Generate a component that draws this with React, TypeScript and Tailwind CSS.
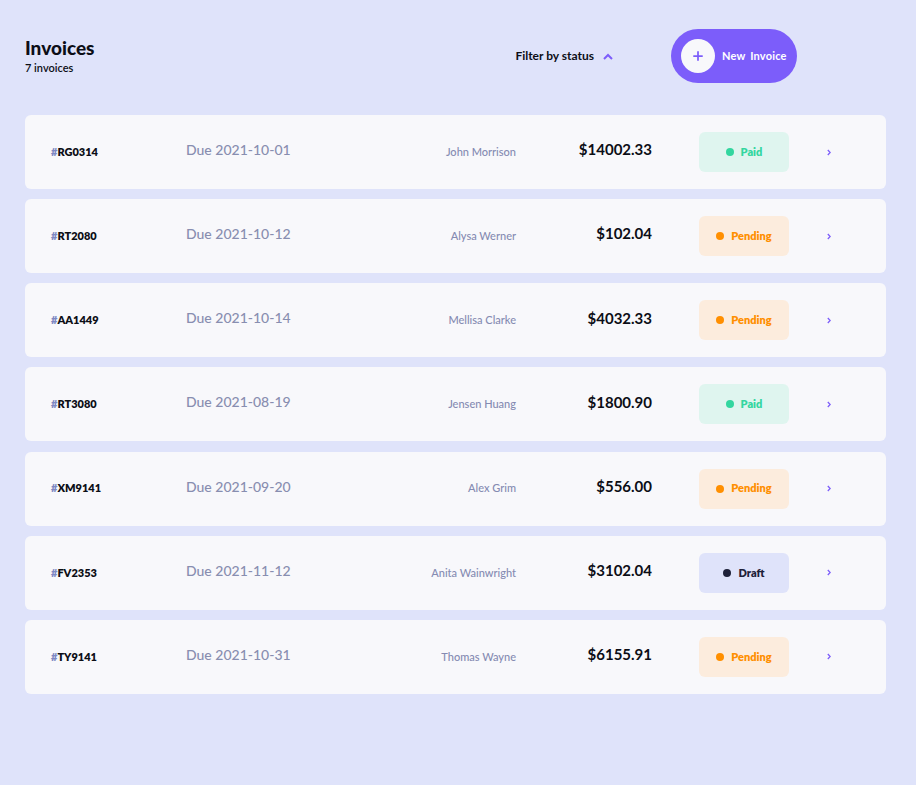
import { Plus } from "lucide-react";

type Status = "Paid" | "Pending" | "Draft";

const invoices: { id: string; due: string; name: string; amount: string; status: Status }[] = [
  { id: "RG0314", due: "2021-10-01", name: "John Morrison", amount: "$14002.33", status: "Paid" },
  { id: "RT2080", due: "2021-10-12", name: "Alysa Werner", amount: "$102.04", status: "Pending" },
  { id: "AA1449", due: "2021-10-14", name: "Mellisa Clarke", amount: "$4032.33", status: "Pending" },
  { id: "RT3080", due: "2021-08-19", name: "Jensen Huang", amount: "$1800.90", status: "Paid" },
  { id: "XM9141", due: "2021-09-20", name: "Alex Grim", amount: "$556.00", status: "Pending" },
  { id: "FV2353", due: "2021-11-12", name: "Anita Wainwright", amount: "$3102.04", status: "Draft" },
  { id: "TY9141", due: "2021-10-31", name: "Thomas Wayne", amount: "$6155.91", status: "Pending" },
];

const badgeStyles: Record<Status, { box: string; dot: string }> = {
  Paid: { box: "bg-[#dff5ef] text-[#33d69f]", dot: "bg-[#33d69f]" },
  Pending: { box: "bg-[#fcecdd] text-[#ff8f00]", dot: "bg-[#ff8f00]" },
  Draft: { box: "bg-[#dfe3fa] text-[#1e2139]", dot: "bg-[#1e2139]" },
};

function StatusBadge({ status }: { status: Status }) {
  const s = badgeStyles[status];
  return (
    <div className={`w-[90px] h-[40px] rounded-md flex items-center justify-center gap-[7px] text-[11px] font-extrabold ${s.box}`}>
      <span className={`w-[8px] h-[8px] rounded-full ${s.dot}`} />
      <span>{status}</span>
    </div>
  );
}

function InvoiceRow({ inv }: { inv: (typeof invoices)[number] }) {
  return (
    <div className="h-[74px] bg-[#f8f8fb] rounded-md flex items-center pl-[26px]">
      <div className="w-[135px] text-[11px] font-extrabold text-[#0c0e16]">
        <span className="text-[#7e88c3]">#</span>
        {inv.id}
      </div>
      <div className="w-[150px] text-[14px] font-medium text-[#888eb0] pb-[5px]">Due {inv.due}</div>
      <div className="w-[180px] text-right text-[11px] font-medium text-[#858bb2]">{inv.name}</div>
      <div className="w-[136px] text-right text-[15px] font-bold text-[#0c0e16] pb-[5px]">{inv.amount}</div>
      <div className="ml-[47px]">
        <StatusBadge status={inv.status} />
      </div>
      <svg className="ml-[38px]" width="4" height="7" viewBox="0 0 4 7" fill="none">
        <path d="M0.8 1l2.4 2.5-2.4 2.5" stroke="#7c5dfa" strokeWidth="1.3" />
      </svg>
    </div>
  );
}

export default function App() {
  return (
    <div className="min-h-[785px] bg-[#dfe3fa] pl-[25px] pr-[30px] pt-[29px] pb-10 font-['Lato',sans-serif]">
      <header className="flex items-center h-[54px] pr-[89px]">
        <div className="flex flex-col">
          <h1 className="text-[19px] leading-[22px] font-black text-[#0c0e16]">Invoices</h1>
          <p className="text-[11px] leading-[14px] font-semibold text-[#0c0e16] mt-[2px]">7 invoices</p>
        </div>
        <button className="ml-auto flex items-center gap-[9px] text-[12px] font-bold text-[#0c0e16]">
          Filter by status
          <svg width="10" height="7" viewBox="0 0 10 7" fill="none">
            <path d="M1 6l4-4 4 4" stroke="#7c5dfa" strokeWidth="2" />
          </svg>
        </button>
        <button className="ml-[58px] w-[126px] h-[54px] rounded-full bg-[#7c5dfa] flex items-center pl-[10px] gap-[7px]">
          <span className="w-[34px] h-[34px] rounded-full bg-[#f8f8fb] flex items-center justify-center">
            <Plus size={14} strokeWidth={3} color="#7c5dfa" />
          </span>
          <span className="text-[11px] font-bold text-white [word-spacing:2px] tracking-[0.2px]">New Invoice</span>
        </button>
      </header>
      <div className="mt-[32px] flex flex-col gap-[10.17px]">
        {invoices.map((inv) => (
          <InvoiceRow key={inv.id} inv={inv} />
        ))}
      </div>
    </div>
  );
}
